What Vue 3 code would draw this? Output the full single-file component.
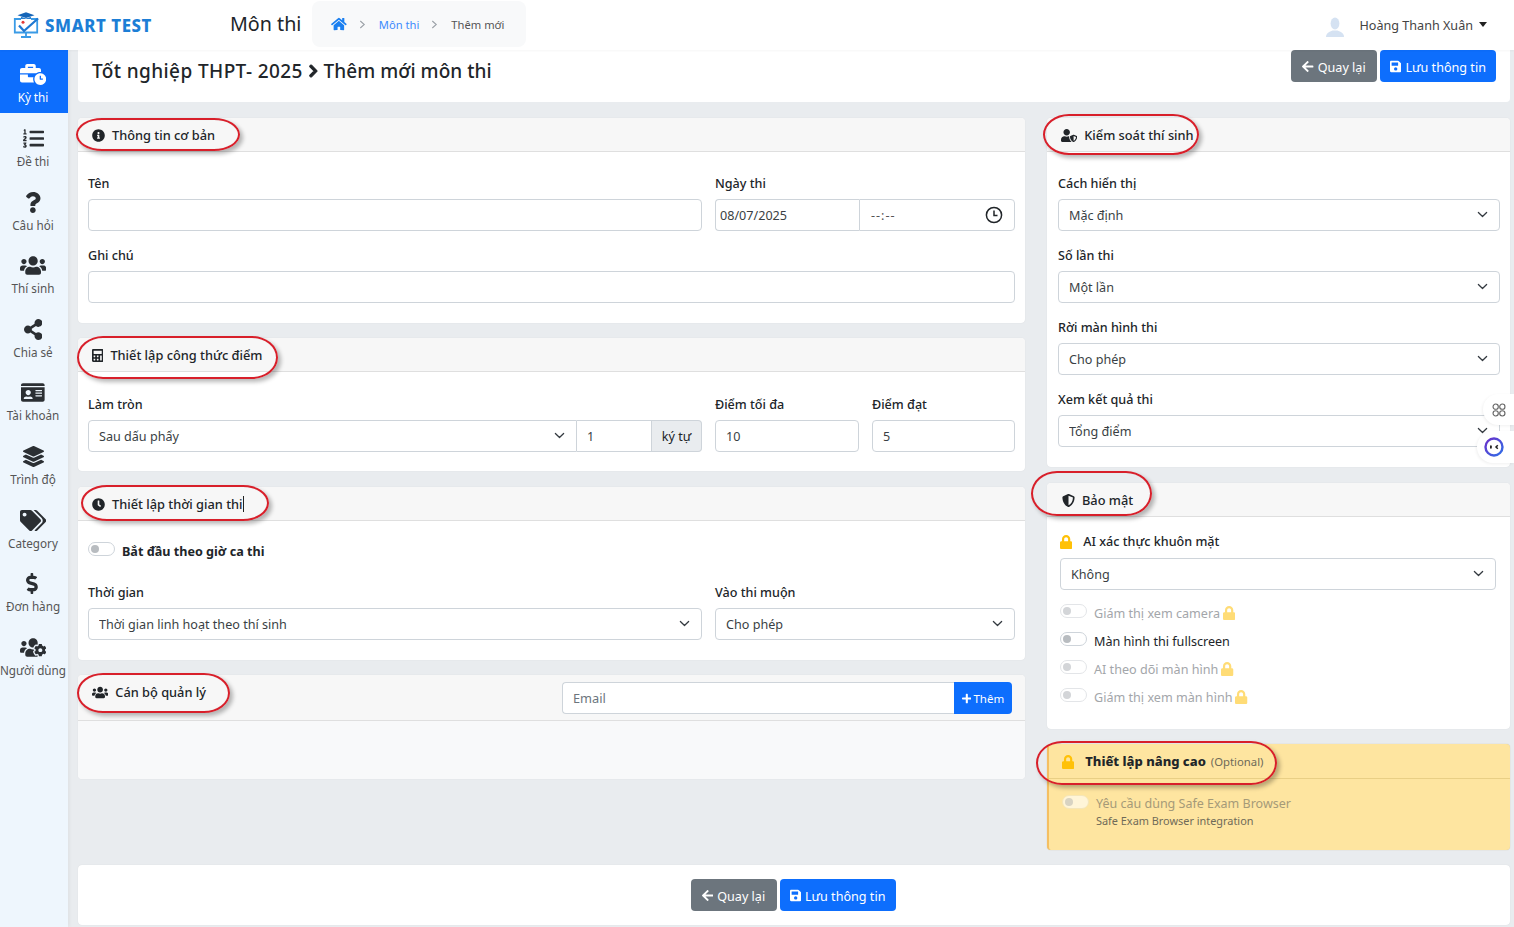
<script setup>
import { h } from 'vue'

const paths = {
  home: [576, 'M280.37 148.26L96 300.11V464a16 16 0 0 0 16 16l112.06-.29a16 16 0 0 0 15.92-16V368a16 16 0 0 1 16-16h64a16 16 0 0 1 16 16v95.64a16 16 0 0 0 16 16.05L464 480a16 16 0 0 0 16-16V300L295.67 148.26a12.19 12.19 0 0 0-15.3 0zM571.6 251.47L488 182.56V44.05a12 12 0 0 0-12-12h-56a12 12 0 0 0-12 12v72.61L318.47 43a48 48 0 0 0-61 0L4.34 251.47a12 12 0 0 0-1.6 16.9l25.5 31A12 12 0 0 0 45.15 301l235.22-193.74a12.19 12.19 0 0 1 15.3 0L530.9 301a12 12 0 0 0 16.9-1.6l25.5-31a12 12 0 0 0-1.7-16.93z'],
  question: [384, 'M202.021 0C122.202 0 70.503 32.703 29.914 91.026c-7.363 10.58-5.093 25.086 5.178 32.874l43.138 32.709c10.373 7.865 25.132 6.026 33.253-4.148 25.049-31.381 43.63-49.449 82.757-49.449 30.764 0 68.816 19.799 68.816 49.631 0 22.552-18.617 34.134-48.993 51.164-35.423 19.86-82.299 44.576-82.299 106.405V320c0 13.255 10.745 24 24 24h72.471c13.255 0 24-10.745 24-24v-5.773c0-42.86 125.268-44.645 125.268-160.627C377.504 66.256 286.902 0 202.021 0zM192 373.459c-38.196 0-69.271 31.075-69.271 69.271 0 38.195 31.075 69.27 69.271 69.27s69.271-31.075 69.271-69.271-31.075-69.27-69.271-69.27z'],
  share: [448, 'M352 320c-22.608 0-43.387 7.819-59.79 20.895l-102.486-64.054a96.551 96.551 0 0 0 0-41.683l102.486-64.054C308.613 184.181 329.392 192 352 192c53.019 0 96-42.981 96-96S405.019 0 352 0s-96 42.981-96 96c0 7.158.79 14.13 2.276 20.841L155.79 180.895C139.387 167.819 118.608 160 96 160c-53.019 0-96 42.981-96 96s42.981 96 96 96c22.608 0 43.387-7.819 59.79-20.895l102.486 64.054A96.301 96.301 0 0 0 256 416c0 53.019 42.981 96 96 96s96-42.981 96-96-42.981-96-96-96z'],
  dollar: [320, 'M209.2 233.4l-108-31.6C88.7 198.2 80 186.5 80 173.5c0-16.3 13.2-29.5 29.5-29.5h66.3c12.2 0 24.2 3.7 34.2 10.5 6.1 4.1 14.3 3.1 19.5-2l34.8-34c7.1-6.9 6.1-18.4-1.8-24.5C238 74.8 207.4 64.1 176 64V16c0-8.8-7.2-16-16-16h-32c-8.8 0-16 7.2-16 16v48h-2.5C45.8 64-5.4 118.7.5 183.6c4.2 46.1 39.4 83.6 83.8 96.6l102.5 30c12.5 3.7 21.2 15.3 21.2 28.3 0 16.3-13.2 29.5-29.5 29.5h-66.3C100 368 88 364.3 78 357.5c-6.1-4.1-14.3-3.1-19.5 2l-34.8 34c-7.1 6.9-6.1 18.4 1.8 24.5 24.5 19.2 55.1 29.9 86.5 30v48c0 8.8 7.2 16 16 16h32c8.8 0 16-7.2 16-16v-48.2c46.6-.9 90.3-28.6 105.7-72.7 21.5-61.6-14.6-124.8-72.5-141.7z'],
  users: [640, 'M96 224c35.3 0 64-28.7 64-64s-28.7-64-64-64-64 28.7-64 64 28.7 64 64 64zm448 0c35.3 0 64-28.7 64-64s-28.7-64-64-64-64 28.7-64 64 28.7 64 64 64zm32 32h-64c-17.6 0-33.5 7.1-45.1 18.6 40.3 22.1 68.9 62 75.1 109.4h66c17.7 0 32-14.3 32-32v-32c0-35.3-28.7-64-64-64zm-256 0c61.9 0 112-50.1 112-112S381.9 32 320 32 208 82.1 208 144s50.1 112 112 112zm76.8 32h-8.3c-20.8 10-43.9 16-68.5 16s-47.6-6-68.5-16h-8.3C179.6 288 128 339.6 128 403.2V432c0 26.5 21.5 48 48 48h288c26.5 0 48-21.5 48-48v-28.8c0-63.6-51.6-115.2-115.2-115.2zm-223.7-13.4C161.5 263.1 145.6 256 128 256H64c-35.3 0-64 28.7-64 64v32c0 17.7 14.3 32 32 32h65.9c6.3-47.4 34.9-87.3 75.2-109.4z'],
  save: [448, 'M433.941 129.941l-83.882-83.882A48 48 0 0 0 316.118 32H48C21.49 32 0 53.49 0 80v352c0 26.51 21.49 48 48 48h352c26.51 0 48-21.49 48-48V163.882a48 48 0 0 0-14.059-33.941zM224 416c-35.346 0-64-28.654-64-64 0-35.346 28.654-64 64-64s64 28.654 64 64c0 35.346-28.654 64-64 64zm96-304.52V212c0 6.627-5.373 12-12 12H76c-6.627 0-12-5.373-12-12V108c0-6.627 5.373-12 12-12h228.52c3.183 0 6.235 1.264 8.485 3.515l3.48 3.48A11.996 11.996 0 0 1 320 111.48z'],
  back: [448, 'M257.5 445.1l-22.2 22.2c-9.4 9.4-24.6 9.4-33.9 0L7 273c-9.4-9.4-9.4-24.6 0-33.9L201.4 44.7c9.4-9.4 24.6-9.4 33.9 0l22.2 22.2c9.5 9.5 9.3 25-.4 34.3L136.6 216H424c13.3 0 24 10.7 24 24v32c0 13.3-10.7 24-24 24H136.6l120.5 114.8c9.8 9.3 10 24.8.4 34.3z'],
  plus: [448, 'M416 208H272V64c0-17.67-14.33-32-32-32h-32c-17.67 0-32 14.33-32 32v144H32c-17.67 0-32 14.33-32 32v32c0 17.67 14.33 32 32 32h144v144c0 17.67 14.33 32 32 32h32c17.67 0 32-14.33 32-32V304h144c17.67 0 32-14.33 32-32v-32c0-17.67-14.33-32-32-32z'],
  lock: [448, 'M400 224h-24v-72C376 68.2 307.8 0 224 0S72 68.2 72 152v72H48c-26.5 0-48 21.5-48 48v192c0 26.5 21.5 48 48 48h352c26.5 0 48-21.5 48-48V272c0-26.5-21.5-48-48-48zm-104 0H152v-72c0-39.7 32.3-72 72-72s72 32.3 72 72v72z'],
  tags: [640, 'M497.941 225.941L286.059 14.059A48 48 0 0 0 252.118 0H48C21.49 0 0 21.49 0 48v204.118a48 48 0 0 0 14.059 33.941l211.882 211.882c18.744 18.745 49.136 18.746 67.882 0l204.118-204.118c18.745-18.745 18.745-49.137 0-67.882zM112 160c-26.51 0-48-21.49-48-48s21.49-48 48-48 48 21.49 48 48-21.49 48-48 48zm513.941 133.823L421.823 497.941c-18.745 18.745-49.137 18.745-67.882 0l-.36-.36L527.64 323.522c16.999-16.999 26.36-39.6 26.36-63.64s-9.362-46.641-26.36-63.64L331.397 0h48.721a48 48 0 0 1 33.941 14.059l211.882 211.882c18.745 18.745 18.745 49.137 0 67.882z'],
  layers: [512, 'M12.41 148.02l232.94 105.67c6.8 3.09 14.49 3.09 21.29 0l232.94-105.67c16.55-7.51 16.55-32.52 0-40.03L266.65 2.31a25.607 25.607 0 0 0-21.29 0L12.41 107.98c-16.55 7.51-16.55 32.53 0 40.04zm487.18 88.28l-58.09-26.33-161.64 73.27c-7.56 3.43-15.59 5.17-23.86 5.17s-16.29-1.74-23.86-5.17L70.51 209.97l-58.1 26.33c-16.55 7.5-16.55 32.5 0 40l232.94 105.59c6.8 3.08 14.49 3.08 21.29 0L499.59 276.3c16.55-7.5 16.55-32.5 0-40zm0 127.8l-57.87-26.23-161.86 73.37c-7.56 3.43-15.59 5.17-23.86 5.17s-16.29-1.74-23.86-5.17L70.29 337.87 12.41 364.1c-16.55 7.5-16.55 32.5 0 40l232.94 105.59c6.8 3.08 14.49 3.08 21.29 0L499.59 404.1c16.55-7.5 16.55-32.5 0-40z'],
  info: [512, 'M256 8C119.043 8 8 119.083 8 256c0 136.997 111.043 248 248 248s248-111.003 248-248C504 119.083 392.957 8 256 8zm0 110c23.196 0 42 18.804 42 42s-18.804 42-42 42-42-18.804-42-42 18.804-42 42-42zm56 254c0 6.627-5.373 12-12 12h-88c-6.627 0-12-5.373-12-12v-24c0-6.627 5.373-12 12-12h12v-64h-12c-6.627 0-12-5.373-12-12v-24c0-6.627 5.373-12 12-12h64c6.627 0 12 5.373 12 12v100h12c6.627 0 12 5.373 12 12v24z'],
  clock: [512, 'M256,8C119,8,8,119,8,256S119,504,256,504,504,393,504,256,393,8,256,8Zm92.49,313h0l-20,25a16,16,0,0,1-22.49,2.5h0l-67-49.72a40,40,0,0,1-15-31.23V112a16,16,0,0,1,16-16h32a16,16,0,0,1,16,16V256l58,42.5A16,16,0,0,1,348.49,321Z'],
  calc: [448, 'M400 0H48C22.4 0 0 22.4 0 48v416c0 25.6 22.4 48 48 48h352c25.6 0 48-22.4 48-48V48c0-25.6-22.4-48-48-48zM128 435.2c0 6.4-6.4 12.8-12.8 12.8H76.8c-6.4 0-12.8-6.4-12.8-12.8v-38.4c0-6.4 6.4-12.8 12.8-12.8h38.4c6.4 0 12.8 6.4 12.8 12.8v38.4zm0-128c0 6.4-6.4 12.8-12.8 12.8H76.8c-6.4 0-12.8-6.4-12.8-12.8v-38.4c0-6.4 6.4-12.8 12.8-12.8h38.4c6.4 0 12.8 6.4 12.8 12.8v38.4zm128 128c0 6.4-6.4 12.8-12.8 12.8h-38.4c-6.4 0-12.8-6.4-12.8-12.8v-38.4c0-6.4 6.4-12.8 12.8-12.8h38.4c6.4 0 12.8 6.4 12.8 12.8v38.4zm0-128c0 6.4-6.4 12.8-12.8 12.8h-38.4c-6.4 0-12.8-6.4-12.8-12.8v-38.4c0-6.4 6.4-12.8 12.8-12.8h38.4c6.4 0 12.8 6.4 12.8 12.8v38.4zm128 128c0 6.4-6.4 12.8-12.8 12.8h-38.4c-6.4 0-12.8-6.4-12.8-12.8V268.8c0-6.4 6.4-12.8 12.8-12.8h38.4c6.4 0 12.8 6.4 12.8 12.8v166.4zm0-256c0 6.4-6.4 12.8-12.8 12.8H76.8c-6.4 0-12.8-6.4-12.8-12.8V76.8C64 70.4 70.4 64 76.8 64h294.4c6.4 0 12.8 6.4 12.8 12.8v102.4z'],
  shield: [512, 'M466.5 83.7l-192-80a48.15 48.15 0 0 0-36.9 0l-192 80C27.7 91.1 16 108.6 16 128c0 198.5 114.5 335.7 221.5 380.3 11.8 4.9 25.1 4.9 36.9 0C360.1 472.6 496 349.3 496 128c0-19.4-11.7-36.9-29.5-44.3zM256.1 446.3l-.1-381 175.9 73.3c-3.3 151.4-82.1 261.1-175.8 307.7z'],
  idcard: [576, 'M528 32H48C21.5 32 0 53.5 0 80v16h576V80c0-26.5-21.5-48-48-48zM0 432c0 26.5 21.5 48 48 48h480c26.5 0 48-21.5 48-48V128H0v304zm352-232c0-4.4 3.6-8 8-8h144c4.4 0 8 3.6 8 8v16c0 4.4-3.6 8-8 8H360c-4.4 0-8-3.6-8-8v-16zm0 64c0-4.4 3.6-8 8-8h144c4.4 0 8 3.6 8 8v16c0 4.4-3.6 8-8 8H360c-4.4 0-8-3.6-8-8v-16zm0 64c0-4.4 3.6-8 8-8h144c4.4 0 8 3.6 8 8v16c0 4.4-3.6 8-8 8H360c-4.4 0-8-3.6-8-8v-16zM176 192c35.3 0 64 28.7 64 64s-28.7 64-64 64-64-28.7-64-64 28.7-64 64-64zM67.1 396.2C75.5 370.5 99.6 352 128 352h8.2c12.3 5.1 25.7 8 39.8 8s27.6-2.9 39.8-8h8.2c28.4 0 52.5 18.5 60.9 44.2 3.2 9.9-5.2 19.8-15.6 19.8H82.7c-10.4 0-18.8-10-15.6-19.8z'],
  listol: [512, 'M61.77 401l17.5-20.15a19.92 19.92 0 0 0 5.07-14.19v-3.31C84.34 356 80.5 352 73 352H16a8 8 0 0 0-8 8v16a8 8 0 0 0 8 8h22.83a157.41 157.41 0 0 0-11 12.31l-5.61 7c-4 5.07-5.25 10.13-2.8 14.88l1.05 1.93c3 5.76 6.29 7.88 12.25 7.88h4.73c10.33 0 15.94 2.44 15.94 9.09 0 4.72-4.2 8.22-14.36 8.22a41.54 41.54 0 0 1-15.47-3.12c-6.49-3.88-11.74-3.5-15.6 3.12l-5.59 9.31c-3.72 6.13-3.19 11.72 2.63 15.94 7.71 4.69 20.38 9.44 37 9.44 34.16 0 48.5-22.75 48.5-44.12-.03-14.38-9.12-29.76-28.73-34.88zM496 224H176a16 16 0 0 0-16 16v32a16 16 0 0 0 16 16h320a16 16 0 0 0 16-16v-32a16 16 0 0 0-16-16zm0-160H176a16 16 0 0 0-16 16v32a16 16 0 0 0 16 16h320a16 16 0 0 0 16-16V80a16 16 0 0 0-16-16zm0 320H176a16 16 0 0 0-16 16v32a16 16 0 0 0 16 16h320a16 16 0 0 0 16-16v-32a16 16 0 0 0-16-16zM16 160h64a8 8 0 0 0 8-8v-16a8 8 0 0 0-8-8H64V40a8 8 0 0 0-8-8H32a8 8 0 0 0-7.14 4.42l-8 16A8 8 0 0 0 24 64h8v64H16a8 8 0 0 0-8 8v16a8 8 0 0 0 8 8zm-3.91 160H80a8 8 0 0 0 8-8v-16a8 8 0 0 0-8-8H41.32c3.29-10.29 48.68-18.68 48.68-56.44 0-29.06-25-39.56-44.47-39.56-21.36 0-33.8 10-40.46 18.75-4.37 5.59-3 10.84 2.8 15.37l8.58 6.88c5.61 4.56 11 2.47 16.12-2.44a13.44 13.44 0 0 1 9.46-3.84c3.33 0 9.28 1.56 9.28 8.75C51 248.19 0 257.31 0 304.59v4C0 316 5.08 320 12.09 320z'],
  chevron: [320, 'M285.476 272.971L91.132 467.314c-9.373 9.373-24.569 9.373-33.941 0l-22.667-22.667c-9.357-9.357-9.375-24.522-.04-33.901L188.505 256 34.484 101.255c-9.335-9.379-9.317-24.544.04-33.901l22.667-22.667c9.373-9.373 24.569-9.373 33.941 0L285.475 239.03c9.373 9.372 9.373 24.568.001 33.941z'],
  userscog: [640, 'M610.5 341.3c2.6-14.1 2.6-28.5 0-42.6l25.8-14.9c3-1.7 4.3-5.2 3.3-8.5-6.7-21.6-18.2-41.2-33.2-57.4-2.3-2.5-6-3.1-9-1.4l-25.8 14.9c-10.9-9.3-23.4-16.5-36.9-21.3v-29.8c0-3.4-2.4-6.4-5.7-7.1-22.3-5-45-4.8-66.2 0-3.3.7-5.7 3.7-5.7 7.1v29.8c-13.5 4.8-26 12-36.9 21.3l-25.8-14.9c-2.9-1.7-6.7-1.1-9 1.4-15 16.2-26.5 35.8-33.2 57.4-1 3.3.4 6.8 3.3 8.5l25.8 14.9c-2.6 14.1-2.6 28.5 0 42.6l-25.8 14.9c-3 1.7-4.3 5.2-3.3 8.5 6.7 21.6 18.2 41.1 33.2 57.4 2.3 2.5 6 3.1 9 1.4l25.8-14.9c10.9 9.3 23.4 16.5 36.9 21.3v29.8c0 3.4 2.4 6.4 5.7 7.1 22.3 5 45 4.8 66.2 0 3.3-.7 5.7-3.7 5.7-7.1v-29.8c13.5-4.8 26-12 36.9-21.3l25.8 14.9c2.9 1.7 6.7 1.1 9-1.4 15-16.2 26.5-35.8 33.2-57.4 1-3.3-.4-6.8-3.3-8.5l-25.8-14.9zM496 368.5c-26.8 0-48.5-21.8-48.5-48.5s21.8-48.5 48.5-48.5 48.5 21.8 48.5 48.5-21.7 48.5-48.5 48.5zM96 224c35.3 0 64-28.7 64-64s-28.7-64-64-64-64 28.7-64 64 28.7 64 64 64zm224 32c1.9 0 3.7-.5 5.6-.6 8.3-21.7 20.5-42.1 36.3-59.2 7.4-8 17.9-12.6 28.9-12.6 6.9 0 13.7 1.8 19.6 5.3l7.9 4.6c.8-.5 1.6-.9 2.4-1.4 7-14.6 11.2-30.8 11.2-48 0-61.9-50.1-112-112-112S208 82.1 208 144c0 61.9 50.1 112 112 112zm105.2 194.5c-2.3-1.2-4.6-2.6-6.8-3.9-8.2 4.8-15.3 9.8-27.5 9.8-10.9 0-21.4-4.6-28.9-12.6-18.3-19.8-32.3-43.9-40.2-69.6-10.7-34.5 24.9-49.7 25.8-50.3-.1-2.6-.1-5.2 0-7.8l-7.9-4.6c-3.8-2.2-7-5-9.8-8.1-3.3.2-6.5.6-9.8.6-24.6 0-47.6-6-68.5-16h-8.3C179.6 288 128 339.6 128 403.2V432c0 26.5 21.5 48 48 48h255.4c-3.7-6-6.2-12.8-6.2-20.3v-9.2zM173.1 274.6C161.5 263.1 145.6 256 128 256H64c-35.3 0-64 28.7-64 64v32c0 17.7 14.3 32 32 32h65.9c6.3-47.4 34.9-87.3 75.2-109.4z'],
  usershield: [640, 'M622.3 271.1l-115.2-45c-4.1-1.6-12.6-3.7-22.2 0l-115.2 45c-10.7 4.2-17.7 14-17.7 24.9 0 111.6 68.7 188.8 132.9 213.9 9.6 3.7 18 1.6 22.2 0C558.4 489.9 640 420.5 640 296c0-10.9-7-20.7-17.7-24.9zM496 462.4V273.3l95.5 37.3c-5.6 87.1-60.9 135.4-95.5 151.8zM224 256c70.7 0 128-57.3 128-128S294.7 0 224 0 96 57.3 96 128s57.3 128 128 128zm96 40c0-2.5.8-4.8 1.1-7.2-2.5-.1-4.9-.8-7.5-.8h-16.7c-22.2 10.2-46.9 16-72.9 16s-50.6-5.8-72.9-16h-16.7C60.2 288 0 348.2 0 422.4V464c0 26.5 21.5 48 48 48h352c6.8 0 13.3-1.5 19.2-4-54-42.9-99.2-116.7-99.2-212z'],
  businesstime: [640, 'M496 224c-79.59 0-144 64.41-144 144s64.41 144 144 144 144-64.41 144-144-64.41-144-144-144zm64 150.29c0 5.34-4.37 9.71-9.71 9.71h-60.57c-5.34 0-9.71-4.37-9.71-9.71v-76.57c0-5.34 4.37-9.71 9.71-9.71h12.57c5.34 0 9.71 4.37 9.71 9.71V352h38.29c5.34 0 9.71 4.37 9.71 9.71v12.58zM496 192c5.4 0 10.72.33 16 .81V144c0-25.6-22.4-48-48-48h-80V48c0-25.6-22.4-48-48-48H176c-25.6 0-48 22.4-48 48v48H48c-25.6 0-48 22.4-48 48v80h395.12c28.6-20.09 63.35-32 100.88-32zM320 96H192V64h128v32zm6.82 224H208c-8.84 0-16-7.16-16-16v-48H0v144c0 25.6 22.4 48 48 48h291.43C327.1 423.96 320 396.82 320 368c0-16.66 2.48-32.72 6.82-48z']
}

const Icon = (props) => {
  const [w, d] = paths[props.name]
  return h('svg', { viewBox: `0 0 ${w} 512`, fill: 'currentColor', 'aria-hidden': 'true' }, [h('path', { d })])
}
Icon.props = ['name']

const menu = [
  { label: 'Kỳ thi', icon: 'businesstime', active: true },
  { label: 'Đề thi', icon: 'listol' },
  { label: 'Câu hỏi', icon: 'question' },
  { label: 'Thí sinh', icon: 'users' },
  { label: 'Chia sẻ', icon: 'share' },
  { label: 'Tài khoản', icon: 'idcard' },
  { label: 'Trình độ', icon: 'layers' },
  { label: 'Category', icon: 'tags' },
  { label: 'Đơn hàng', icon: 'dollar' },
  { label: 'Người dùng', icon: 'userscog' }
]
const control = [
  { label: 'Cách hiển thị', value: 'Mặc định' },
  { label: 'Số lần thi', value: 'Một lần' },
  { label: 'Rời màn hình thi', value: 'Cho phép' },
  { label: 'Xem kết quả thi', value: 'Tổng điểm' }
]
const security = [
  { label: 'Giám thị xem camera', locked: true },
  { label: 'Màn hình thi fullscreen', locked: false },
  { label: 'AI theo dõi màn hình', locked: true },
  { label: 'Giám thị xem màn hình', locked: true }
]
</script>

<template>
  <div class="app">
    <header class="topbar">
      <div class="brand">
        <svg class="logo" viewBox="0 0 26 26" fill="none">
          <path d="M4.500 3.200 13 .3l8.500 2.900L13 6z" fill="#1565b8" />
          <path d="M8 4.800V7h10V4.800L13 6.500z" fill="#2a7fd0" />
          <path d="M18 7h6.200v13.500H1.800V7H8" stroke="#3a9be6" stroke-width="1.800" />
          <path d="M6 13.500l5 5.500L25 6.500" stroke="#1f78d1" stroke-width="2.300" />
          <circle cx="10" cy="10.300" r="1.500" fill="#e53935" />
          <path d="M8 25h10M13 21v4" stroke="#3a9be6" stroke-width="1.800" />
        </svg>
        <span class="brand-name">SMART TEST</span>
      </div>
      <div class="page-name">Môn thi</div>
      <nav class="crumbs">
        <Icon name="home" class="crumb-home" />
        <svg class="crumb-sep" viewBox="0 0 8 10"><path d="M1.500 1l4.500 4-4.500 4" /></svg>
        <span class="crumb-link">Môn thi</span>
        <svg class="crumb-sep" viewBox="0 0 8 10"><path d="M1.500 1l4.500 4-4.500 4" /></svg>
        <span class="crumb-now">Thêm mới</span>
      </nav>
      <div class="user">
        <svg class="avatar" viewBox="0 0 20 20" fill="#d5e2f2">
          <ellipse cx="10" cy="6.500" rx="4.400" ry="6" />
          <path d="M1 20c0-4 3.500-5.500 6.500-6.500h5c3 1 6.500 2.500 6.500 6.500z" />
        </svg>
        <span class="user-name">Hoàng Thanh Xuân</span>
        <span class="caret"></span>
      </div>
    </header>

    <div class="shell">
      <aside class="sidebar">
        <a v-for="m in menu" :key="m.label" class="nav-item" :class="{ active: m.active }">
          <Icon :name="m.icon" class="nav-icon" />
          <span class="nav-label">{{ m.label }}</span>
        </a>
      </aside>

      <main class="content">
        <section class="title-card">
          <h1 class="title"><span class="t-a">Tốt nghiệp THPT- 2025</span><Icon name="chevron" class="title-chev" /><span class="t-b">Thêm mới môn thi</span></h1>
          <div class="actions">
            <button class="btn btn-grey"><Icon name="back" class="btn-icon" /> Quay lại</button>
            <button class="btn btn-blue"><Icon name="save" class="btn-icon" /> Lưu thông tin</button>
          </div>
        </section>

        <div class="columns">
          <div class="col">
            <section class="card">
              <div class="card-head"><Icon name="info" class="head-icon" /> Thông tin cơ bản<i class="mark m1"></i></div>
              <div class="card-body">
                <div class="row two">
                  <div class="field"><label>Tên</label><input class="ctl" type="text" /></div>
                  <div class="field">
                    <label>Ngày thi</label>
                    <div class="date-group">
                      <input class="ctl date" type="text" value="08/07/2025" />
                      <div class="time">
                        <span class="time-text">--:--</span>
                        <svg class="time-icon" viewBox="0 0 18 18" fill="none" stroke="#212529" stroke-width="1.500">
                          <circle cx="9" cy="9" r="7.600" />
                          <path d="M9 4.500V9.500H12.500" />
                        </svg>
                      </div>
                    </div>
                  </div>
                </div>
                <div class="field last"><label>Ghi chú</label><input class="ctl" type="text" /></div>
              </div>
            </section>

            <section class="card">
              <div class="card-head"><Icon name="calc" class="head-icon" /> Thiết lập công thức điểm<i class="mark m2"></i></div>
              <div class="card-body tight">
                <div class="row three">
                  <div class="field last">
                    <label>Làm tròn</label>
                    <div class="group">
                      <div class="sel grow">
                        <select class="ctl"><option>Sau dấu phẩy</option></select>
                        <svg class="chev" viewBox="0 0 16 16"><path d="M2 5l6 6 6-6" /></svg>
                      </div>
                      <input class="ctl count" type="text" value="1" />
                      <span class="addon">ký tự</span>
                    </div>
                  </div>
                  <div class="field last"><label>Điểm tối đa</label><input class="ctl" type="text" value="10" /></div>
                  <div class="field last"><label>Điểm đạt</label><input class="ctl" type="text" value="5" /></div>
                </div>
              </div>
            </section>

            <section class="card gap-16">
              <div class="card-head"><Icon name="clock" class="head-icon" /> Thiết lập thời gian thi<span class="text-cursor"></span><i class="mark m3"></i></div>
              <div class="card-body time-body">
                <div class="switch-line strong"><span class="switch"></span>Bắt đầu theo giờ ca thi</div>
                <div class="row two">
                  <div class="field last">
                    <label>Thời gian</label>
                    <div class="sel">
                      <select class="ctl"><option>Thời gian linh hoạt theo thí sinh</option></select>
                      <svg class="chev" viewBox="0 0 16 16"><path d="M2 5l6 6 6-6" /></svg>
                    </div>
                  </div>
                  <div class="field last">
                    <label>Vào thi muộn</label>
                    <div class="sel">
                      <select class="ctl"><option>Cho phép</option></select>
                      <svg class="chev" viewBox="0 0 16 16"><path d="M2 5l6 6 6-6" /></svg>
                    </div>
                  </div>
                </div>
              </div>
            </section>

            <section class="card">
              <div class="card-head head-tall">
                <span class="head-title"><Icon name="users" class="head-icon wide" /> Cán bộ quản lý<i class="mark m4"></i></span>
                <div class="email-group">
                  <input class="ctl email" type="text" placeholder="Email" />
                  <button class="add"><Icon name="plus" class="add-icon" /> Thêm</button>
                </div>
              </div>
              <div class="empty-body"></div>
            </section>
          </div>

          <div class="col">
            <section class="card">
              <div class="card-head pad-right"><Icon name="usershield" class="head-icon wide" /> Kiểm soát thí sinh<i class="mark m5"></i></div>
              <div class="card-body side">
                <div v-for="(c, i) in control" :key="c.label" class="field" :class="{ last: i === 3 }">
                  <label>{{ c.label }}</label>
                  <div class="sel">
                    <select class="ctl"><option>{{ c.value }}</option></select>
                    <svg class="chev" viewBox="0 0 16 16"><path d="M2 5l6 6 6-6" /></svg>
                  </div>
                </div>
              </div>
            </section>

            <section class="card gap-16">
              <div class="card-head pad-right sec-head"><Icon name="shield" class="head-icon" /> Bảo mật<i class="mark m6"></i></div>
              <div class="sec-body">
                <div class="sec-label"><Icon name="lock" class="lock big" /> AI xác thực khuôn mặt</div>
                <div class="sel sec-sel">
                  <select class="ctl"><option>Không</option></select>
                  <svg class="chev" viewBox="0 0 16 16"><path d="M2 5l6 6 6-6" /></svg>
                </div>
                <div v-for="s in security" :key="s.label" class="switch-line sec-line" :class="{ off: s.locked }">
                  <span class="switch"></span>{{ s.label }}<Icon v-if="s.locked" name="lock" class="lock small" />
                </div>
              </div>
            </section>

            <section class="card advanced">
              <div class="adv-head"><Icon name="lock" class="lock big adv-lock" /> <b>Thiết lập nâng cao</b> <small>(Optional)</small><i class="mark m7"></i></div>
              <div class="adv-body">
                <span class="switch adv-switch"></span>
                <div>
                  <div class="adv-title">Yêu cầu dùng Safe Exam Browser</div>
                  <div class="adv-sub">Safe Exam Browser integration</div>
                </div>
              </div>
            </section>
          </div>
        </div>

        <section class="foot-card">
          <button class="btn btn-grey"><Icon name="back" class="btn-icon" /> Quay lại</button>
          <button class="btn btn-blue"><Icon name="save" class="btn-icon" /> Lưu thông tin</button>
        </section>
      </main>
    </div>

    <div class="float f-cmd">
      <svg viewBox="0 0 16 16" fill="none" stroke="#666" stroke-width="1.300">
        <circle cx="4.200" cy="4.200" r="3" /><circle cx="11.800" cy="4.200" r="3" />
        <circle cx="4.200" cy="11.800" r="3" /><circle cx="11.800" cy="11.800" r="3" />
      </svg>
    </div>
    <div class="float f-bot">
      <svg viewBox="0 0 20 20">
        <defs>
          <linearGradient id="botRing" x1="0" y1="0" x2="1" y2="1">
            <stop offset="0" stop-color="#6b2fc9" />
            <stop offset="1" stop-color="#2f6fe8" />
          </linearGradient>
        </defs>
        <circle cx="10" cy="10" r="8.500" fill="#fff" stroke="url(#botRing)" stroke-width="2.400" />
        <rect x="6" y="8.300" width="1.800" height="3.400" rx=".9" fill="#222" />
        <path d="M13.800 8.200l-1.800 1.800 1.800 1.800" fill="none" stroke="#222" stroke-width="1.500" />
      </svg>
    </div>
  </div>
</template>

<style>
html, body { margin: 0; background: #e9ecef; }
</style>

<style scoped>
* { box-sizing: border-box; }
.app {
  position: relative; width: 1514px; height: 927px; overflow: hidden;
  background: #e9ecef; color: #212529;
  font-family: "Noto Sans", "Open Sans", sans-serif; font-size: 12.600px; line-height: 19px;
}
.topbar {
  display: flex; align-items: center; height: 50px; background: #fff;
  box-shadow: 0 1px 2px rgba(0,0,0,.04); position: relative; z-index: 2;
}
.brand { display: flex; align-items: center; width: 230px; padding-left: 13px; gap: 6px; }
.logo { width: 26px; height: 26px; }
.brand-name { color: #1c7ed6; font-weight: 800; font-size: 16.800px; letter-spacing: .6px; }
.page-name { font-size: 19.700px; width: 82px; line-height: 26px; margin-top: -2px; }
.crumbs {
  display: flex; align-items: center; height: 46px; width: 214px; padding: 0 0 0 19px;
  background: #f8f9fa; border-radius: 8px; font-size: 11.200px; margin-top: -2px;
}
.crumb-home { height: 14px; color: #1a7ff0; }
.crumb-sep {
  width: 7px; height: 9px; margin: 0 13px 0 12px; fill: none; stroke: #9aa0a6; stroke-width: 1.200;
}
.crumb-link { color: #3d8bfd; }
.crumb-now { color: #555; }
.user { margin-left: auto; display: flex; align-items: center; padding-right: 27px; }
.avatar { width: 20px; height: 20px; margin-right: 14px; margin-top: 4px; }
.user-name { color: #444; }
.caret {
  margin-left: 6px; margin-top: -2px; width: 0; height: 0;
  border-left: 4.500px solid transparent; border-right: 4.500px solid transparent; border-top: 5px solid #222;
}

.shell { display: flex; height: 877px; }
.sidebar { width: 68px; flex: none; background: #eef6fd; box-shadow: 2px 0 3px rgba(0,0,0,.04); }
.nav-item {
  display: flex; flex-direction: column; align-items: center;
  height: 63.600px; padding: 15px 2px 0 0; color: #555; white-space: nowrap;
}
.nav-item.active { background: #0d6efd; color: #fff; height: 63px; padding-top: 14px; }
.nav-icon { height: 21px; color: #2b2f33; margin-bottom: 3px; flex: none; }
.active .nav-icon { color: #fff; }
.nav-label { font-size: 11.700px; line-height: 18px; }

.content { flex: 1; min-width: 0; padding: 0 4px 0 10px; }
.title-card {
  display: flex; justify-content: space-between; height: 52px; margin-bottom: 16px;
  padding-left: 14px; padding-right: 14px; background: #fff; border-radius: 0 0 4px 4px;
}
.title {
  display: flex; align-items: center; height: 24px; margin: 9px 0 0;
  font-size: 19px; font-weight: 500; line-height: 24px;
}
.t-a { letter-spacing: .4px; }
.t-b { letter-spacing: .05px; }
.title-chev { height: 14px; margin: 0 6px; stroke: currentColor; stroke-width: 40; }
.actions { display: flex; gap: 3px; align-items: flex-start; }
.btn {
  display: flex; align-items: center; justify-content: center; gap: 4px; height: 32px; border: 0;
  border-radius: 4px; font: inherit; color: #fff; padding: 2px 0 0;
}
.btn-grey { background: #6c757d; width: 86px; }
.btn-blue { background: #0d6efd; width: 116px; }
.btn-icon { height: 13px; margin-top: -1px; }

.columns { display: grid; grid-template-columns: 947px 463px; column-gap: 22px; }
.col { display: flex; flex-direction: column; gap: 15px; }
.gap-16 { margin-top: 1px; }
.card { background: #fff; border-radius: 4px; box-shadow: 0 0 1px rgba(0,0,0,.12); }
.card-head {
  position: relative; display: flex; align-items: center; gap: 7px; height: 34px; padding: 1px 0 0 14px;
  background: #f7f7f7; border-bottom: 1px solid #dfdfdf; border-radius: 4px 4px 0 0;
  font-size: 12.800px; font-weight: 500;
}
.sec-head { padding-left: 15px; }
.head-icon { height: 13px; flex: none; }
.head-icon.wide { height: 13px; }
.card-body { padding: 21px 10px 20px; }
.card-body.tight { padding: 22px 10px 19px; }
.card-body.side { padding: 21px 10px 20px 11px; }
.card-body.time-body { padding: 20px 10px 20px; }
.row { display: grid; column-gap: 13px; }
.row.two { grid-template-columns: 614px 300px; }
.row.three { grid-template-columns: 614px 144px 143px; }
.field { display: flex; flex-direction: column; margin-bottom: 14px; min-width: 0; }
.field.last { margin-bottom: 0; }
.field label { height: 19px; margin-bottom: 7px; padding-top: 1px; font-weight: 500; }
.ctl {
  display: block; width: 100%; height: 32px; padding: 0 10px; background: #fff;
  border: 1px solid #ced4da; border-radius: 4px; color: #3a3f44; font: inherit; outline: none;
}
select.ctl { appearance: none; }
.date-group { display: flex; }
.date { width: 144px; flex: none; padding: 0 4px; border-radius: 4px 0 0 4px; border-right: 0; }
.time {
  flex: 1; display: flex; align-items: center; justify-content: space-between; height: 32px;
  padding: 0 11px; border: 1px solid #ced4da; border-radius: 0 4px 4px 0; color: #555;
}
.time-text { letter-spacing: 1px; }
.time-icon { width: 18px; height: 18px; }
.sel { position: relative; }
.chev {
  position: absolute; right: 12px; top: 10px; width: 11px; height: 11px; pointer-events: none;
  fill: none; stroke: #343a40; stroke-width: 1.800; stroke-linecap: round; stroke-linejoin: round;
}
.group { display: flex; }
.grow { width: 489px; flex: none; }
.grow .ctl { border-radius: 4px 0 0 4px; }
.count { width: 75px; flex: none; border-radius: 0; border-left: 0; }
.addon {
  flex: 1; display: flex; align-items: center; justify-content: center; height: 32px; background: #e9ecef;
  border: 1px solid #ced4da; border-left: 0; border-radius: 0 4px 4px 0;
}
.switch-line { display: flex; align-items: center; }
.strong { font-weight: 700; margin: 1px 0 21px; height: 19px; }
.switch {
  position: relative; display: inline-block; flex: none; width: 27px; height: 14px; margin-right: 7px;
  margin-top: -5px; border: 1px solid #ced4da; border-radius: 7px; background: #fff;
}
.switch::after {
  content: ""; position: absolute; left: 2px; top: 2px; width: 8px; height: 8px; border-radius: 50%; background: #b8bcc0;
}
.text-cursor { display: inline-block; width: 1px; height: 16px; margin-left: -7px; background: #222; }
.head-tall { height: 46px; justify-content: space-between; padding: 1px 13px 0 14px; }
.head-title { position: relative; display: flex; align-items: center; gap: 7px; margin-top: -11px; }
.email-group { display: flex; width: 450px; margin-top: 0; }
.email { flex: 1; min-width: 0; border-radius: 4px 0 0 4px; border-right: 0; font-weight: 400; }
.email::placeholder { color: #6c757d; }
.add {
  flex: none; width: 58px; display: flex; align-items: center; justify-content: center; gap: 2px; border: 0;
  background: #0d6efd; color: #fff; font: inherit; font-size: 11.500px; font-weight: 400; border-radius: 0 4px 4px 0;
}
.add-icon { height: 11px; }
.empty-body { height: 58px; background: #f8f9fa; border-radius: 0 0 4px 4px; }

.sec-body { padding: 15px 14px 18px 13px; }
.sec-label { display: flex; align-items: center; height: 19px; margin-bottom: 7px; font-weight: 500; gap: 11px; }
.lock { color: #ffc107; }
.lock.big { height: 14px; }
.lock.small { height: 14px; margin-left: 3px; opacity: .55; }
.sec-sel { margin-bottom: 9px; }
.sec-line { height: 28px; color: #212529; }
.sec-line .switch { margin-right: 7px; }
.sec-line.off { color: #a3a6aa; }
.sec-line.off .switch { border-color: #e3e5e8; }
.sec-line.off .switch::after { background: #d3d5d8; }

.advanced { background: #fee5a0; border-left: 2px solid #f5bf62; box-shadow: 0 0 1px rgba(160,120,0,.4); height: 106px; }
.adv-head {
  position: relative; display: flex; align-items: center; height: 35px; padding: 1px 0 0 13px; gap: 5px;
  border-bottom: 1px solid #e9cf85; font-size: 13px;
}
.adv-lock { margin-right: 6px; }
.adv-head b { font-weight: 800; }
.adv-head small { font-size: 11.300px; color: #6f6a58; }
.adv-body { display: flex; padding: 16px 0 0 13px; }
.adv-switch { background: #fff5d8; border-color: #f5e6b8; margin-top: 0; margin-right: 7px; }
.adv-switch::after { background: #d8d3c2; }
.adv-title { color: #a59a78; font-size: 12.500px; line-height: 18px; }
.adv-sub { color: #6f6a58; font-size: 10.900px; line-height: 16px; }

.foot-card {
  display: flex; justify-content: center; gap: 3px; height: 60px; margin-top: 15px;
  padding: 14px 2px 0 0; background: #fff; border-radius: 4px; box-shadow: 0 0 1px rgba(0,0,0,.12);
}

.mark {
  position: absolute; pointer-events: none; border: 2px solid #d81f2a; border-radius: 26px / 50%;
  box-shadow: 3px 3px 4px rgba(0,0,0,.28), inset 0 0 1px rgba(0,0,0,.1);
}
.m1 { left: -2px; top: 0; width: 164px; height: 33px; }
.m2 { left: -1px; top: -2px; width: 201px; height: 43px; }
.m3 { left: 3px; top: -2px; width: 188px; height: 36px; }
.m4 { left: -15px; top: -10px; width: 153px; height: 40px; }
.m5 { left: -4px; top: -4px; width: 156px; height: 41px; }
.m6 { left: -16px; top: -12px; width: 121px; height: 45px; }
.m7 { left: -13px; top: -3px; width: 241px; height: 44px; }

.float { position: absolute; display: flex; align-items: center; justify-content: center; background: #fff; z-index: 3; }
.f-cmd { left: 1483px; top: 394px; width: 31px; height: 31px; border-radius: 50% 0 0 50%; padding-right: 0; box-shadow: -1px 1px 3px rgba(0,0,0,.06); }
.f-cmd svg { width: 14px; height: 14px; }
.f-bot { left: 1477px; top: 431px; width: 37px; height: 32px; padding-right: 3px; border-radius: 16px 0 0 16px; box-shadow: -1px 1px 3px rgba(0,0,0,.06); }
.f-bot svg { width: 20px; height: 20px; }
</style>
